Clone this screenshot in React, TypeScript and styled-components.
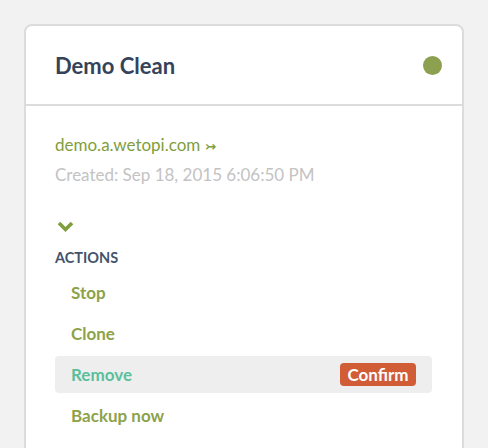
import React from "react";
import styled, { createGlobalStyle } from "styled-components";

const Global = createGlobalStyle`
  html, body { margin: 0; padding: 0; }
  body {
    background: #f2f2f3;
    font-family: Lato, "Open Sans", sans-serif;
    -webkit-font-smoothing: antialiased;
  }
`;

const Page = styled.div`
  padding: 24px 0 0 24px;
  height: 424px;
  overflow: hidden;
`;

const Card = styled.div`
  width: 436px;
  height: 460px;
  background: #fff;
  border: 2px solid #dcdcdc;
  border-radius: 8px;
`;

const Header = styled.div`
  height: 78px;
  display: flex;
  align-items: center;
  justify-content: space-between;
  padding: 0 20px 0 29px;
  border-bottom: 2px solid #dcdcdc;
`;

const Title = styled.h1`
  margin: 0;
  font-size: 22px;
  font-weight: 700;
  color: #35435a;
`;

const Dot = styled.span`
  width: 19px;
  height: 19px;
  border-radius: 50%;
  background: #8ca04f;
`;

const Body = styled.div`
  padding: 25px 30px 0 29px;
  display: flex;
  flex-direction: column;
`;

const Link = styled.a`
  font-size: 17px;
  line-height: 28px;
  color: #7f9e3d;
  text-decoration: none;
`;

const Arrow = styled.span`
  font-family: "DejaVu Sans", sans-serif;
  font-size: 13px;
  font-weight: 700;
  margin-left: 5px;
`;

const Created = styled.div`
  font-size: 17px;
  line-height: 28px;
  color: #c3c3c3;
`;

const Toggle = styled.svg`
  margin-top: 31px;
  margin-left: 2px;
  display: block;
`;

const SectionLabel = styled.div`
  margin-top: 15px;
  font-size: 14.5px;
  line-height: 20px;
  font-weight: 700;
  color: #44536b;
`;

const ActionList = styled.div`
  margin-top: 6px;
  display: flex;
  flex-direction: column;
  gap: 4px;
`;

const ActionRow = styled.div<{ $active?: boolean }>`
  height: 37px;
  display: flex;
  align-items: center;
  justify-content: space-between;
  padding: 0 16px 0 16px;
  border-radius: 4px;
  background: ${(p) => (p.$active ? "#eeeeee" : "transparent")};
  font-size: 17px;
  font-weight: 700;
  color: ${(p) => (p.$active ? "#5cbf9c" : "#8da24a")};
`;

const ConfirmButton = styled.button`
  height: 23px;
  width: 76px;
  border: none;
  border-radius: 4px;
  background: #d05d36;
  color: #fff;
  font-family: Lato, sans-serif;
  font-size: 17px;
  font-weight: 700;
  padding: 0;
`;

export default function App() {
  return (
    <>
      <Global />
      <Page>
        <Card>
          <Header>
            <Title>Demo Clean</Title>
            <Dot />
          </Header>
          <Body>
            <Link>
              demo.a.wetopi.com<Arrow>↣</Arrow>
            </Link>
            <Created>Created: Sep 18, 2015 6:06:50 PM</Created>
            <Toggle width="17" height="13" viewBox="0 0 17 13">
              <polyline
                points="2,3 8.5,9.5 15,3"
                fill="none"
                stroke="#7f9e3d"
                strokeWidth="3.6"
              />
            </Toggle>
            <SectionLabel>ACTIONS</SectionLabel>
            <ActionList>
              <ActionRow>Stop</ActionRow>
              <ActionRow>Clone</ActionRow>
              <ActionRow $active>
                Remove
                <ConfirmButton>Confirm</ConfirmButton>
              </ActionRow>
              <ActionRow>Backup now</ActionRow>
            </ActionList>
          </Body>
        </Card>
      </Page>
    </>
  );
}
